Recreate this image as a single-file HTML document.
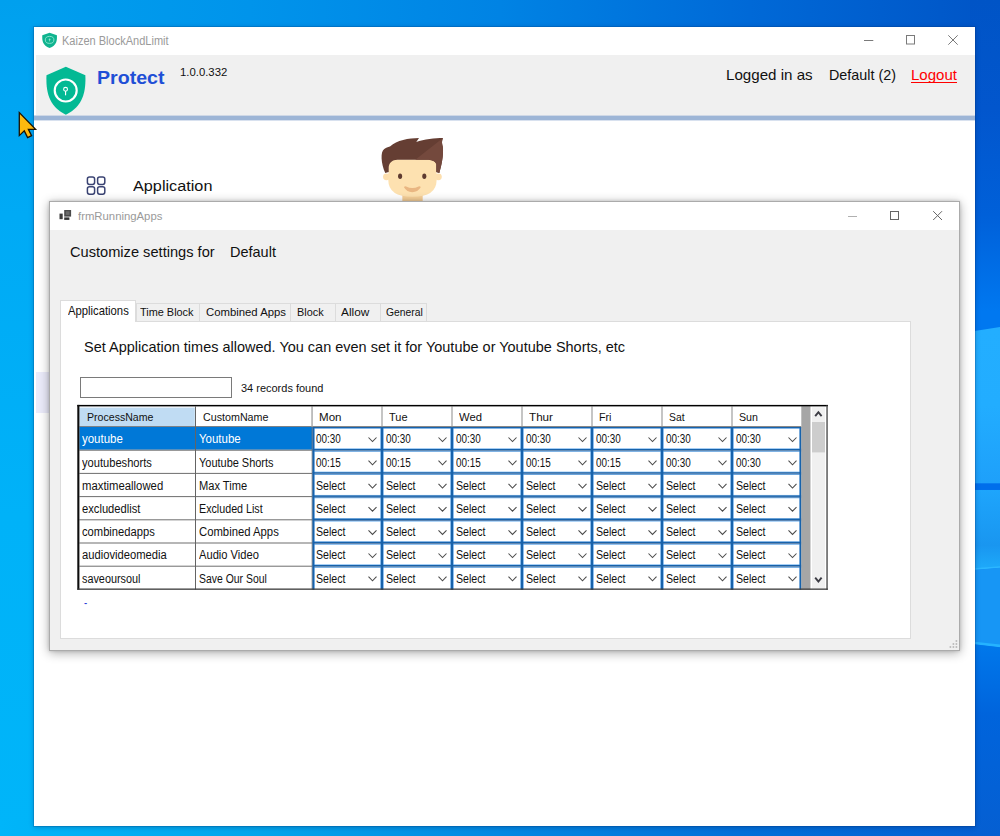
<!DOCTYPE html>
<html lang="en"><head><meta charset="utf-8"><title>Kaizen BlockAndLimit</title>
<style>
html,body{margin:0;padding:0;}
body{width:1000px;height:836px;overflow:hidden;position:relative;font-family:"Liberation Sans",sans-serif;
 background:linear-gradient(to right,#00a0ee 0px,#0094eb 250px,#0083e4 500px,#0069d7 750px,#0054c6 1000px);}
.a{position:absolute;}
.t{position:absolute;white-space:nowrap;line-height:1;transform-origin:0 0;}
</style></head><body>

<div class="a" style="left:0;top:0;width:40px;height:836px;background:linear-gradient(to bottom,#00a0ee 0px,#00a5f2 100px,#00aaf5 215px,#00b2f8 515px,#00b5f9 836px);"></div>
<div class="a" style="left:0;top:820px;width:1000px;height:16px;background:linear-gradient(to right,#00b5f9 0px,#00a5eb 260px,#0088e2 500px,#006fd8 740px,#055fd2 1000px);"></div>
<svg class="a" style="left:970px;top:0;" width="30" height="836" viewBox="970 0 30 836">
<defs>
<linearGradient id="rA" gradientUnits="userSpaceOnUse" x1="0" y1="0" x2="0" y2="331"><stop offset="0" stop-color="#0054c6"/><stop offset=".33" stop-color="#0256cd"/><stop offset=".65" stop-color="#0060d9"/><stop offset=".94" stop-color="#0078f0"/><stop offset="1" stop-color="#0078f0"/></linearGradient>
<linearGradient id="rB" gradientUnits="userSpaceOnUse" x1="0" y1="328" x2="0" y2="483"><stop offset="0" stop-color="#23aeff"/><stop offset=".5" stop-color="#22adff"/><stop offset="1" stop-color="#1ea0fa"/></linearGradient>
<linearGradient id="rC" gradientUnits="userSpaceOnUse" x1="0" y1="490" x2="0" y2="569"><stop offset="0" stop-color="#1ea5fc"/><stop offset=".7" stop-color="#1996f0"/><stop offset="1" stop-color="#1eaafa"/></linearGradient>
<linearGradient id="rE" gradientUnits="userSpaceOnUse" x1="0" y1="644" x2="0" y2="836"><stop offset="0" stop-color="#0078eb"/><stop offset=".37" stop-color="#0064dc"/><stop offset="1" stop-color="#055fd2"/></linearGradient>
</defs>
<rect x="970" y="0" width="30" height="836" fill="url(#rA)"/>
<polygon points="970,331.8 1000,327 1000,484 970,484" fill="url(#rB)"/>
<rect x="970" y="483.3" width="30" height="6.6" fill="#006eeb"/>
<polygon points="970,489.9 1000,489.9 1000,567.6 970,570" fill="url(#rC)"/>
<polygon points="970,568.6 1000,566.2 1000,568 970,570.4" fill="#2cb6ff"/>
<polygon points="970,570.2 1000,567.8 1000,647 970,643" fill="#1796f5"/>
<polygon points="970,641.2 1000,644.6 1000,647.4 970,644" fill="#25b3ff"/>
<polygon points="970,643.8 1000,647.2 1000,836 970,836" fill="url(#rE)"/>
</svg>
<div class="a" id="win" style="left:34.1px;top:26.8px;width:941.1px;height:799px;background:#fff;box-shadow:0 0 0 1px rgba(0,40,100,.17),0 1px 5px rgba(0,25,80,.32);"></div>
<div class="a" style="left:36px;top:55px;width:939px;height:61px;background:#f0f0f0;"></div>
<div class="a" style="left:34px;top:115px;width:941px;height:6px;background:linear-gradient(to bottom,#cfd8e6 0px,#cfd8e6 1px,#9db5d6 1px,#9db5d6 5px,#d8e1ef 5px,#d8e1ef 6px);"></div>
<svg class="a" style="left:41px;top:31px;" width="18" height="18" viewBox="0 0 18 18">
<path d="M8.6 1.7 L15.9 4.2 C16.2 9.8 15.6 14.3 8.6 16.9 C1.6 14.3 1 9.8 1.3 4.2 Z" fill="#10b48f"/>
<ellipse cx="8.6" cy="8.9" rx="4.3" ry="3.5" fill="none" stroke="#a6ecd9" stroke-width="0.8"/>
<circle cx="8.6" cy="8.4" r="0.9" fill="#8fe3cd"/><rect x="8.3" y="8.6" width="0.7" height="1.8" fill="#8fe3cd"/>
</svg>
<span class="t" id="t1" style="left:62.20px;top:35px;font-size:12px;color:#9a9a9a;transform:scaleX(0.9186);">Kaizen BlockAndLimit</span>
<svg class="a" style="left:855px;top:27px;" width="120" height="28" viewBox="855 27 120 28" fill="none" stroke="#7a7a7a" stroke-width="1">
<path d="M864 40.5 H873.3"/><rect x="906.5" y="35.5" width="8" height="8.5"/><path d="M948.3 35.3 L957.7 44.7 M957.7 35.3 L948.3 44.7"/></svg>
<svg class="a" style="left:40px;top:60px;" width="55" height="60" viewBox="0 0 766 836">
<path d="M360 93 L632 213 C640 440 604 640 360 764 C116 640 82 440 90 213 Z" fill="#03b994"/>
<circle cx="358" cy="425" r="153" fill="none" stroke="#fff" stroke-width="30"/>
<circle cx="356" cy="408" r="27" fill="none" stroke="#fff" stroke-width="15"/>
<rect x="348" y="430" width="16" height="62" fill="#fff"/>
</svg>
<span class="t" id="t2" style="left:97.40px;top:70px;font-size:17.8px;color:#1f4fd6;transform:scaleX(1.1024);font-weight:bold;">Protect</span>
<span class="t" id="t3" style="left:180.30px;top:67px;font-size:10.8px;color:#111;transform:scaleX(1.0503);">1.0.0.332</span>
<span class="t" id="t4" style="left:726.40px;top:67px;font-size:15px;color:#111;transform:scaleX(1.0084);">Logged in as</span>
<span class="t" id="t5" style="left:829.00px;top:68px;font-size:14.2px;color:#111;transform:scaleX(1.0103);">Default (2)</span>
<span class="t" id="t6" style="left:911.00px;top:69px;font-size:13.8px;color:#ff0000;transform:scaleX(1.0893);">Logout</span>
<div class="a" style="left:911px;top:81.5px;width:46px;height:1px;background:#ff0000;"></div>
<svg class="a" style="left:85px;top:175px;" width="22" height="21" viewBox="85 175 22 21" fill="none" stroke="#3a4373" stroke-width="1.5">
<rect x="87.4" y="176.9" width="7.2" height="7.5" rx="2.1"/><rect x="97.6" y="176.9" width="7.2" height="7.5" rx="2.1"/>
<rect x="87.4" y="186.7" width="7.2" height="7.5" rx="2.1"/><rect x="97.6" y="186.7" width="7.2" height="7.5" rx="2.1"/></svg>
<span class="t" id="t7" style="left:133.00px;top:178px;font-size:15.3px;color:#111;transform:scaleX(1.0613);">Application</span>
<div class="a" style="left:36px;top:372px;width:14px;height:41px;background:#ebebfa;"></div>
<svg class="a" style="left:370px;top:125px;" width="90" height="77" viewBox="0 0 885 757">
<rect x="318" y="660" width="200" height="100" fill="#f6cf98"/>
<circle cx="162" cy="510" r="34" fill="#fddfae"/><circle cx="672" cy="510" r="34" fill="#fddfae"/>
<path d="M180 410 Q180 340 250 340 L590 340 Q655 340 655 410 L655 540 Q655 705 418 705 Q180 705 180 540 Z" fill="#fde1b0"/>
<path d="M150 472 C108 380 100 262 140 236 C160 222 188 218 200 210 C262 150 380 130 482 128 L455 166 C530 142 640 128 718 128 C700 170 712 190 716 215 C726 300 702 400 682 472 L652 462 L652 385 C642 352 600 342 560 342 L270 342 C220 342 184 372 184 420 L184 462 Z" fill="#653e33"/>
<path d="M445 342 L705 138 L718 128 C700 170 712 190 716 215 C726 300 702 400 682 472 L652 462 L652 385 C642 352 600 342 560 342 Z" fill="#74493d"/>
<ellipse cx="296" cy="505" rx="20" ry="27" fill="#5e3b30"/><ellipse cx="534" cy="505" rx="20" ry="27" fill="#5e3b30"/>
<path d="M334 612 Q340 598 356 604 Q415 636 478 604 Q494 598 499 612 Q470 660 415 660 Q362 660 334 612 Z" fill="#e9b682"/>
</svg>
<div class="a" id="iwin" style="left:49px;top:201px;width:911px;height:450px;background:#f0f0f0;box-sizing:border-box;border:1px solid #ababab;box-shadow:0 2px 10px rgba(0,0,0,.32),0 0 3px rgba(0,0,0,.16);"></div>
<div class="a" style="left:50px;top:202px;width:909px;height:28px;background:#fff;"></div>
<svg class="a" style="left:58px;top:208px;" width="15" height="14" viewBox="58 208 15 14">
<rect x="59.5" y="213.6" width="3.2" height="5.6" fill="#3c3c3c"/><rect x="64.2" y="210" width="6.9" height="6.6" fill="#4a4a4a"/>
<rect x="65.8" y="211.3" width="3.7" height="3.6" fill="#6a6a6a"/><rect x="64.2" y="217.4" width="5.2" height="2.5" fill="#333"/></svg>
<span class="t" id="t8" style="left:77.50px;top:211px;font-size:11.2px;color:#9a9a9a;transform:scaleX(1.0127);">frmRunningApps</span>
<svg class="a" style="left:840px;top:203px;" width="118" height="26" viewBox="840 203 118 26" fill="none" stroke-width="1">
<path d="M848 216.5 H857" stroke="#b0b0b0"/><rect x="890.5" y="211.5" width="8" height="8" stroke="#666"/><path d="M933.2 211.2 L942 220 M942 211.2 L933.2 220" stroke="#666"/></svg>
<span class="t" id="t9" style="left:69.60px;top:245px;font-size:14.2px;color:#111;transform:scaleX(1.0305);">Customize settings for</span>
<span class="t" id="t10" style="left:230.00px;top:245px;font-size:14.2px;color:#111;transform:scaleX(1.0219);">Default</span>
<div class="a" style="left:60px;top:321px;width:851px;height:318px;background:#fff;box-sizing:border-box;border:1px solid #dcdcdc;"></div>
<div class="a" style="left:60px;top:300px;width:76px;height:22px;background:#fff;box-sizing:border-box;border:1px solid #dcdcdc;border-bottom:none;"></div>
<span class="t" id="t11" style="left:67.60px;top:305px;font-size:12.4px;color:#111;transform:scaleX(0.9097);">Applications</span>
<div class="a" style="left:136px;top:303px;width:64px;height:19px;background:#f0f0f0;box-sizing:border-box;border:1px solid #dcdcdc;"></div>
<span class="t" id="t12" style="left:140.40px;top:307px;font-size:11px;color:#111;transform:scaleX(0.9914);">Time Block</span>
<div class="a" style="left:199px;top:303px;width:92px;height:19px;background:#f0f0f0;box-sizing:border-box;border:1px solid #dcdcdc;"></div>
<span class="t" id="t13" style="left:205.50px;top:307px;font-size:11px;color:#111;transform:scaleX(1.0301);">Combined Apps</span>
<div class="a" style="left:290px;top:303px;width:46px;height:19px;background:#f0f0f0;box-sizing:border-box;border:1px solid #dcdcdc;"></div>
<span class="t" id="t14" style="left:297.00px;top:307px;font-size:11px;color:#111;transform:scaleX(0.9907);">Block</span>
<div class="a" style="left:335px;top:303px;width:46px;height:19px;background:#f0f0f0;box-sizing:border-box;border:1px solid #dcdcdc;"></div>
<span class="t" id="t15" style="left:341.20px;top:307px;font-size:11px;color:#111;transform:scaleX(1.0742);">Allow</span>
<div class="a" style="left:380px;top:303px;width:47px;height:19px;background:#f0f0f0;box-sizing:border-box;border:1px solid #dcdcdc;"></div>
<span class="t" id="t16" style="left:386.20px;top:307px;font-size:11px;color:#111;transform:scaleX(0.9397);">General</span>
<span class="t" id="t17" style="left:84.40px;top:340px;font-size:14.2px;color:#111;transform:scaleX(1.0209);">Set Application times allowed. You can even set it for Youtube or Youtube Shorts, etc</span>
<div class="a" style="left:80px;top:377px;width:152px;height:21px;background:#fff;box-sizing:border-box;border:1px solid #7a7a7a;"></div>
<span class="t" id="t18" style="left:241.00px;top:383px;font-size:11.5px;color:#111;transform:scaleX(0.9547);">34 records found</span>
<svg class="a" style="left:70px;top:400px;" width="770" height="196" viewBox="70 400 770 196"><rect x="77.30" y="405.00" width="750.70" height="184.50" fill="#fff"/><rect x="79.40" y="407.60" width="115.40" height="18.40" fill="#c0dcf3"/><rect x="79.40" y="426.70" width="232.80" height="23.00" fill="#0078d7"/><rect x="79.40" y="426.00" width="721.90" height="0.85" fill="#747474"/><rect x="79.40" y="449.70" width="232.60" height="1.00" fill="#6e6e6e"/><rect x="79.40" y="472.90" width="232.60" height="1.00" fill="#6e6e6e"/><rect x="79.40" y="496.10" width="232.60" height="1.00" fill="#6e6e6e"/><rect x="79.40" y="519.30" width="232.60" height="1.00" fill="#6e6e6e"/><rect x="79.40" y="542.50" width="232.60" height="1.00" fill="#6e6e6e"/><rect x="79.40" y="565.70" width="232.60" height="1.00" fill="#6e6e6e"/><rect x="195.00" y="406.50" width="1.00" height="183.00" fill="#646464"/><rect x="311.40" y="406.50" width="1.30" height="20.50" fill="#a0a0a0"/><rect x="311.70" y="427.00" width="1.00" height="162.50" fill="#707070"/><rect x="381.50" y="406.50" width="1.00" height="20.50" fill="#8c8c8c"/><rect x="451.50" y="406.50" width="1.00" height="20.50" fill="#8c8c8c"/><rect x="521.50" y="406.50" width="1.00" height="20.50" fill="#8c8c8c"/><rect x="591.50" y="406.50" width="1.00" height="20.50" fill="#8c8c8c"/><rect x="661.50" y="406.50" width="1.00" height="20.50" fill="#8c8c8c"/><rect x="731.50" y="406.50" width="1.00" height="20.50" fill="#8c8c8c"/><rect x="312.70" y="427.00" width="1.50" height="162.50" fill="#1762ab"/><rect x="314.20" y="427.00" width="0.40" height="162.50" fill="#3a94e8"/><rect x="380.45" y="427.00" width="0.50" height="162.50" fill="#3a94e8"/><rect x="380.95" y="427.00" width="2.10" height="162.50" fill="#1762ab"/><rect x="383.05" y="427.00" width="0.50" height="162.50" fill="#3a94e8"/><rect x="450.45" y="427.00" width="0.50" height="162.50" fill="#3a94e8"/><rect x="450.95" y="427.00" width="2.10" height="162.50" fill="#1762ab"/><rect x="453.05" y="427.00" width="0.50" height="162.50" fill="#3a94e8"/><rect x="520.45" y="427.00" width="0.50" height="162.50" fill="#3a94e8"/><rect x="520.95" y="427.00" width="2.10" height="162.50" fill="#1762ab"/><rect x="523.05" y="427.00" width="0.50" height="162.50" fill="#3a94e8"/><rect x="590.45" y="427.00" width="0.50" height="162.50" fill="#3a94e8"/><rect x="590.95" y="427.00" width="2.10" height="162.50" fill="#1762ab"/><rect x="593.05" y="427.00" width="0.50" height="162.50" fill="#3a94e8"/><rect x="660.45" y="427.00" width="0.50" height="162.50" fill="#3a94e8"/><rect x="660.95" y="427.00" width="2.10" height="162.50" fill="#1762ab"/><rect x="663.05" y="427.00" width="0.50" height="162.50" fill="#3a94e8"/><rect x="730.45" y="427.00" width="0.50" height="162.50" fill="#3a94e8"/><rect x="730.95" y="427.00" width="2.10" height="162.50" fill="#1762ab"/><rect x="733.05" y="427.00" width="0.50" height="162.50" fill="#3a94e8"/><rect x="799.40" y="427.00" width="0.40" height="162.50" fill="#3a94e8"/><rect x="799.80" y="427.00" width="1.50" height="162.50" fill="#1762ab"/><rect x="312.70" y="427.00" width="488.60" height="1.30" fill="#1762ab"/><rect x="314.20" y="428.30" width="485.60" height="0.40" fill="#3a94e8"/><rect x="312.70" y="448.55" width="488.60" height="0.45" fill="#3a94e8"/><rect x="312.70" y="449.00" width="488.60" height="1.50" fill="#1762ab"/><rect x="312.70" y="450.50" width="488.60" height="0.80" fill="#3f6a9a"/><rect x="312.70" y="451.30" width="488.60" height="0.50" fill="#3a94e8"/><rect x="312.70" y="471.75" width="488.60" height="0.45" fill="#3a94e8"/><rect x="312.70" y="472.20" width="488.60" height="1.50" fill="#1762ab"/><rect x="312.70" y="473.70" width="488.60" height="0.80" fill="#3f6a9a"/><rect x="312.70" y="474.50" width="488.60" height="0.50" fill="#3a94e8"/><rect x="312.70" y="494.95" width="488.60" height="0.45" fill="#3a94e8"/><rect x="312.70" y="495.40" width="488.60" height="1.50" fill="#1762ab"/><rect x="312.70" y="496.90" width="488.60" height="0.80" fill="#3f6a9a"/><rect x="312.70" y="497.70" width="488.60" height="0.50" fill="#3a94e8"/><rect x="312.70" y="518.15" width="488.60" height="0.45" fill="#3a94e8"/><rect x="312.70" y="518.60" width="488.60" height="1.50" fill="#1762ab"/><rect x="312.70" y="520.10" width="488.60" height="0.80" fill="#3f6a9a"/><rect x="312.70" y="520.90" width="488.60" height="0.50" fill="#3a94e8"/><rect x="312.70" y="541.35" width="488.60" height="0.45" fill="#3a94e8"/><rect x="312.70" y="541.80" width="488.60" height="1.50" fill="#1762ab"/><rect x="312.70" y="543.30" width="488.60" height="0.80" fill="#3f6a9a"/><rect x="312.70" y="544.10" width="488.60" height="0.50" fill="#3a94e8"/><rect x="312.70" y="564.55" width="488.60" height="0.45" fill="#3a94e8"/><rect x="312.70" y="565.00" width="488.60" height="1.50" fill="#1762ab"/><rect x="312.70" y="566.50" width="488.60" height="0.80" fill="#3f6a9a"/><rect x="312.70" y="567.30" width="488.60" height="0.50" fill="#3a94e8"/><rect x="380.95" y="427.00" width="2.10" height="162.50" fill="#1762ab"/><rect x="450.95" y="427.00" width="2.10" height="162.50" fill="#1762ab"/><rect x="520.95" y="427.00" width="2.10" height="162.50" fill="#1762ab"/><rect x="590.95" y="427.00" width="2.10" height="162.50" fill="#1762ab"/><rect x="660.95" y="427.00" width="2.10" height="162.50" fill="#1762ab"/><rect x="730.95" y="427.00" width="2.10" height="162.50" fill="#1762ab"/><rect x="312.70" y="427.00" width="1.50" height="162.50" fill="#1762ab"/><rect x="799.80" y="427.00" width="1.50" height="162.50" fill="#1762ab"/><rect x="801.30" y="406.20" width="9.40" height="183.30" fill="#a6a6a6"/><rect x="810.70" y="406.20" width="15.60" height="183.30" fill="#ffffff"/><rect x="812.00" y="407.20" width="13.00" height="181.30" fill="#f0f0f0"/><rect x="812.00" y="422.00" width="13.00" height="30.40" fill="#cdcdcd"/><path d="M815.2 416.2 L818.4 412.2 L821.6 416.2" fill="none" stroke="#3c3c44" stroke-width="1.9"/><path d="M815.2 577.6 L818.4 581.6 L821.6 577.6" fill="none" stroke="#3c3c44" stroke-width="1.9"/><rect x="77.30" y="404.90" width="750.70" height="1.50" fill="#000"/><rect x="77.30" y="404.90" width="2.10" height="184.90" fill="#0c0c0c"/><rect x="826.30" y="405.50" width="1.50" height="184.30" fill="#5a5a5a"/><rect x="77.30" y="588.50" width="750.50" height="1.30" fill="#3a3a3a"/><path d="M368.50 437.50 L372.50 441.60 L376.50 437.50" fill="none" stroke="#4a4a4a" stroke-width="1.05"/><path d="M438.50 437.50 L442.50 441.60 L446.50 437.50" fill="none" stroke="#4a4a4a" stroke-width="1.05"/><path d="M508.50 437.50 L512.50 441.60 L516.50 437.50" fill="none" stroke="#4a4a4a" stroke-width="1.05"/><path d="M578.50 437.50 L582.50 441.60 L586.50 437.50" fill="none" stroke="#4a4a4a" stroke-width="1.05"/><path d="M648.50 437.50 L652.50 441.60 L656.50 437.50" fill="none" stroke="#4a4a4a" stroke-width="1.05"/><path d="M718.50 437.50 L722.50 441.60 L726.50 437.50" fill="none" stroke="#4a4a4a" stroke-width="1.05"/><path d="M788.50 437.50 L792.50 441.60 L796.50 437.50" fill="none" stroke="#4a4a4a" stroke-width="1.05"/><path d="M368.50 460.70 L372.50 464.80 L376.50 460.70" fill="none" stroke="#4a4a4a" stroke-width="1.05"/><path d="M438.50 460.70 L442.50 464.80 L446.50 460.70" fill="none" stroke="#4a4a4a" stroke-width="1.05"/><path d="M508.50 460.70 L512.50 464.80 L516.50 460.70" fill="none" stroke="#4a4a4a" stroke-width="1.05"/><path d="M578.50 460.70 L582.50 464.80 L586.50 460.70" fill="none" stroke="#4a4a4a" stroke-width="1.05"/><path d="M648.50 460.70 L652.50 464.80 L656.50 460.70" fill="none" stroke="#4a4a4a" stroke-width="1.05"/><path d="M718.50 460.70 L722.50 464.80 L726.50 460.70" fill="none" stroke="#4a4a4a" stroke-width="1.05"/><path d="M788.50 460.70 L792.50 464.80 L796.50 460.70" fill="none" stroke="#4a4a4a" stroke-width="1.05"/><path d="M368.50 483.90 L372.50 488.00 L376.50 483.90" fill="none" stroke="#4a4a4a" stroke-width="1.05"/><path d="M438.50 483.90 L442.50 488.00 L446.50 483.90" fill="none" stroke="#4a4a4a" stroke-width="1.05"/><path d="M508.50 483.90 L512.50 488.00 L516.50 483.90" fill="none" stroke="#4a4a4a" stroke-width="1.05"/><path d="M578.50 483.90 L582.50 488.00 L586.50 483.90" fill="none" stroke="#4a4a4a" stroke-width="1.05"/><path d="M648.50 483.90 L652.50 488.00 L656.50 483.90" fill="none" stroke="#4a4a4a" stroke-width="1.05"/><path d="M718.50 483.90 L722.50 488.00 L726.50 483.90" fill="none" stroke="#4a4a4a" stroke-width="1.05"/><path d="M788.50 483.90 L792.50 488.00 L796.50 483.90" fill="none" stroke="#4a4a4a" stroke-width="1.05"/><path d="M368.50 507.10 L372.50 511.20 L376.50 507.10" fill="none" stroke="#4a4a4a" stroke-width="1.05"/><path d="M438.50 507.10 L442.50 511.20 L446.50 507.10" fill="none" stroke="#4a4a4a" stroke-width="1.05"/><path d="M508.50 507.10 L512.50 511.20 L516.50 507.10" fill="none" stroke="#4a4a4a" stroke-width="1.05"/><path d="M578.50 507.10 L582.50 511.20 L586.50 507.10" fill="none" stroke="#4a4a4a" stroke-width="1.05"/><path d="M648.50 507.10 L652.50 511.20 L656.50 507.10" fill="none" stroke="#4a4a4a" stroke-width="1.05"/><path d="M718.50 507.10 L722.50 511.20 L726.50 507.10" fill="none" stroke="#4a4a4a" stroke-width="1.05"/><path d="M788.50 507.10 L792.50 511.20 L796.50 507.10" fill="none" stroke="#4a4a4a" stroke-width="1.05"/><path d="M368.50 530.30 L372.50 534.40 L376.50 530.30" fill="none" stroke="#4a4a4a" stroke-width="1.05"/><path d="M438.50 530.30 L442.50 534.40 L446.50 530.30" fill="none" stroke="#4a4a4a" stroke-width="1.05"/><path d="M508.50 530.30 L512.50 534.40 L516.50 530.30" fill="none" stroke="#4a4a4a" stroke-width="1.05"/><path d="M578.50 530.30 L582.50 534.40 L586.50 530.30" fill="none" stroke="#4a4a4a" stroke-width="1.05"/><path d="M648.50 530.30 L652.50 534.40 L656.50 530.30" fill="none" stroke="#4a4a4a" stroke-width="1.05"/><path d="M718.50 530.30 L722.50 534.40 L726.50 530.30" fill="none" stroke="#4a4a4a" stroke-width="1.05"/><path d="M788.50 530.30 L792.50 534.40 L796.50 530.30" fill="none" stroke="#4a4a4a" stroke-width="1.05"/><path d="M368.50 553.50 L372.50 557.60 L376.50 553.50" fill="none" stroke="#4a4a4a" stroke-width="1.05"/><path d="M438.50 553.50 L442.50 557.60 L446.50 553.50" fill="none" stroke="#4a4a4a" stroke-width="1.05"/><path d="M508.50 553.50 L512.50 557.60 L516.50 553.50" fill="none" stroke="#4a4a4a" stroke-width="1.05"/><path d="M578.50 553.50 L582.50 557.60 L586.50 553.50" fill="none" stroke="#4a4a4a" stroke-width="1.05"/><path d="M648.50 553.50 L652.50 557.60 L656.50 553.50" fill="none" stroke="#4a4a4a" stroke-width="1.05"/><path d="M718.50 553.50 L722.50 557.60 L726.50 553.50" fill="none" stroke="#4a4a4a" stroke-width="1.05"/><path d="M788.50 553.50 L792.50 557.60 L796.50 553.50" fill="none" stroke="#4a4a4a" stroke-width="1.05"/><path d="M368.50 576.70 L372.50 580.80 L376.50 576.70" fill="none" stroke="#4a4a4a" stroke-width="1.05"/><path d="M438.50 576.70 L442.50 580.80 L446.50 576.70" fill="none" stroke="#4a4a4a" stroke-width="1.05"/><path d="M508.50 576.70 L512.50 580.80 L516.50 576.70" fill="none" stroke="#4a4a4a" stroke-width="1.05"/><path d="M578.50 576.70 L582.50 580.80 L586.50 576.70" fill="none" stroke="#4a4a4a" stroke-width="1.05"/><path d="M648.50 576.70 L652.50 580.80 L656.50 576.70" fill="none" stroke="#4a4a4a" stroke-width="1.05"/><path d="M718.50 576.70 L722.50 580.80 L726.50 576.70" fill="none" stroke="#4a4a4a" stroke-width="1.05"/><path d="M788.50 576.70 L792.50 580.80 L796.50 576.70" fill="none" stroke="#4a4a4a" stroke-width="1.05"/></svg>
<span class="t" id="t19" style="left:87.25px;top:411px;font-size:11.6px;color:#111;transform:scaleX(0.9122);">ProcessName</span>
<span class="t" id="t20" style="left:203.10px;top:411px;font-size:11.6px;color:#111;transform:scaleX(0.9234);">CustomName</span>
<span class="t" id="t21" style="left:319.00px;top:411px;font-size:11.6px;color:#111;transform:scaleX(0.9973);">Mon</span>
<span class="t" id="t22" style="left:389.00px;top:411px;font-size:11.6px;color:#111;transform:scaleX(0.9465);">Tue</span>
<span class="t" id="t23" style="left:459.00px;top:411px;font-size:11.6px;color:#111;transform:scaleX(0.9719);">Wed</span>
<span class="t" id="t24" style="left:529.00px;top:411px;font-size:11.6px;color:#111;transform:scaleX(1.0068);">Thur</span>
<span class="t" id="t25" style="left:599.00px;top:411px;font-size:11.6px;color:#111;transform:scaleX(0.9250);">Fri</span>
<span class="t" id="t26" style="left:669.00px;top:411px;font-size:11.6px;color:#111;transform:scaleX(0.8908);">Sat</span>
<span class="t" id="t27" style="left:739.00px;top:411px;font-size:11.6px;color:#111;transform:scaleX(0.9202);">Sun</span>
<span class="t" id="t28" style="left:82.40px;top:433px;font-size:12px;color:#fff;transform:scaleX(0.9562);">youtube</span>
<span class="t" id="t29" style="left:199.00px;top:433px;font-size:12px;color:#fff;transform:scaleX(0.9560);">Youtube</span>
<span class="t" id="t30" style="left:315.60px;top:433px;font-size:12px;color:#111;transform:scaleX(0.8250);">00:30</span>
<span class="t" id="t31" style="left:385.60px;top:433px;font-size:12px;color:#111;transform:scaleX(0.8250);">00:30</span>
<span class="t" id="t32" style="left:455.60px;top:433px;font-size:12px;color:#111;transform:scaleX(0.8250);">00:30</span>
<span class="t" id="t33" style="left:525.60px;top:433px;font-size:12px;color:#111;transform:scaleX(0.8250);">00:30</span>
<span class="t" id="t34" style="left:595.60px;top:433px;font-size:12px;color:#111;transform:scaleX(0.8250);">00:30</span>
<span class="t" id="t35" style="left:665.60px;top:433px;font-size:12px;color:#111;transform:scaleX(0.8250);">00:30</span>
<span class="t" id="t36" style="left:735.60px;top:433px;font-size:12px;color:#111;transform:scaleX(0.8250);">00:30</span>
<span class="t" id="t37" style="left:82.40px;top:457px;font-size:12px;color:#111;transform:scaleX(0.9275);">youtubeshorts</span>
<span class="t" id="t38" style="left:199.00px;top:457px;font-size:12px;color:#111;transform:scaleX(0.9130);">Youtube Shorts</span>
<span class="t" id="t39" style="left:315.60px;top:457px;font-size:12px;color:#111;transform:scaleX(0.8250);">00:15</span>
<span class="t" id="t40" style="left:385.60px;top:457px;font-size:12px;color:#111;transform:scaleX(0.8250);">00:15</span>
<span class="t" id="t41" style="left:455.60px;top:457px;font-size:12px;color:#111;transform:scaleX(0.8250);">00:15</span>
<span class="t" id="t42" style="left:525.60px;top:457px;font-size:12px;color:#111;transform:scaleX(0.8250);">00:15</span>
<span class="t" id="t43" style="left:595.60px;top:457px;font-size:12px;color:#111;transform:scaleX(0.8250);">00:15</span>
<span class="t" id="t44" style="left:665.60px;top:457px;font-size:12px;color:#111;transform:scaleX(0.8250);">00:30</span>
<span class="t" id="t45" style="left:735.60px;top:457px;font-size:12px;color:#111;transform:scaleX(0.8250);">00:30</span>
<span class="t" id="t46" style="left:82.40px;top:480px;font-size:12px;color:#111;transform:scaleX(0.9437);">maxtimeallowed</span>
<span class="t" id="t47" style="left:199.00px;top:480px;font-size:12px;color:#111;transform:scaleX(0.9246);">Max Time</span>
<span class="t" id="t48" style="left:315.60px;top:480px;font-size:12px;color:#111;transform:scaleX(0.8843);">Select</span>
<span class="t" id="t49" style="left:385.60px;top:480px;font-size:12px;color:#111;transform:scaleX(0.8843);">Select</span>
<span class="t" id="t50" style="left:455.60px;top:480px;font-size:12px;color:#111;transform:scaleX(0.8843);">Select</span>
<span class="t" id="t51" style="left:525.60px;top:480px;font-size:12px;color:#111;transform:scaleX(0.8843);">Select</span>
<span class="t" id="t52" style="left:595.60px;top:480px;font-size:12px;color:#111;transform:scaleX(0.8843);">Select</span>
<span class="t" id="t53" style="left:665.60px;top:480px;font-size:12px;color:#111;transform:scaleX(0.8843);">Select</span>
<span class="t" id="t54" style="left:735.60px;top:480px;font-size:12px;color:#111;transform:scaleX(0.8843);">Select</span>
<span class="t" id="t55" style="left:82.40px;top:503px;font-size:12px;color:#111;transform:scaleX(0.9314);">excludedlist</span>
<span class="t" id="t56" style="left:199.00px;top:503px;font-size:12px;color:#111;transform:scaleX(0.8922);">Excluded List</span>
<span class="t" id="t57" style="left:315.60px;top:503px;font-size:12px;color:#111;transform:scaleX(0.8843);">Select</span>
<span class="t" id="t58" style="left:385.60px;top:503px;font-size:12px;color:#111;transform:scaleX(0.8843);">Select</span>
<span class="t" id="t59" style="left:455.60px;top:503px;font-size:12px;color:#111;transform:scaleX(0.8843);">Select</span>
<span class="t" id="t60" style="left:525.60px;top:503px;font-size:12px;color:#111;transform:scaleX(0.8843);">Select</span>
<span class="t" id="t61" style="left:595.60px;top:503px;font-size:12px;color:#111;transform:scaleX(0.8843);">Select</span>
<span class="t" id="t62" style="left:665.60px;top:503px;font-size:12px;color:#111;transform:scaleX(0.8843);">Select</span>
<span class="t" id="t63" style="left:735.60px;top:503px;font-size:12px;color:#111;transform:scaleX(0.8843);">Select</span>
<span class="t" id="t64" style="left:82.40px;top:526px;font-size:12px;color:#111;transform:scaleX(0.9326);">combinedapps</span>
<span class="t" id="t65" style="left:199.00px;top:526px;font-size:12px;color:#111;transform:scaleX(0.9419);">Combined Apps</span>
<span class="t" id="t66" style="left:315.60px;top:526px;font-size:12px;color:#111;transform:scaleX(0.8843);">Select</span>
<span class="t" id="t67" style="left:385.60px;top:526px;font-size:12px;color:#111;transform:scaleX(0.8843);">Select</span>
<span class="t" id="t68" style="left:455.60px;top:526px;font-size:12px;color:#111;transform:scaleX(0.8843);">Select</span>
<span class="t" id="t69" style="left:525.60px;top:526px;font-size:12px;color:#111;transform:scaleX(0.8843);">Select</span>
<span class="t" id="t70" style="left:595.60px;top:526px;font-size:12px;color:#111;transform:scaleX(0.8843);">Select</span>
<span class="t" id="t71" style="left:665.60px;top:526px;font-size:12px;color:#111;transform:scaleX(0.8843);">Select</span>
<span class="t" id="t72" style="left:735.60px;top:526px;font-size:12px;color:#111;transform:scaleX(0.8843);">Select</span>
<span class="t" id="t73" style="left:82.40px;top:549px;font-size:12px;color:#111;transform:scaleX(0.9341);">audiovideomedia</span>
<span class="t" id="t74" style="left:199.00px;top:549px;font-size:12px;color:#111;transform:scaleX(0.9287);">Audio Video</span>
<span class="t" id="t75" style="left:315.60px;top:549px;font-size:12px;color:#111;transform:scaleX(0.8843);">Select</span>
<span class="t" id="t76" style="left:385.60px;top:549px;font-size:12px;color:#111;transform:scaleX(0.8843);">Select</span>
<span class="t" id="t77" style="left:455.60px;top:549px;font-size:12px;color:#111;transform:scaleX(0.8843);">Select</span>
<span class="t" id="t78" style="left:525.60px;top:549px;font-size:12px;color:#111;transform:scaleX(0.8843);">Select</span>
<span class="t" id="t79" style="left:595.60px;top:549px;font-size:12px;color:#111;transform:scaleX(0.8843);">Select</span>
<span class="t" id="t80" style="left:665.60px;top:549px;font-size:12px;color:#111;transform:scaleX(0.8843);">Select</span>
<span class="t" id="t81" style="left:735.60px;top:549px;font-size:12px;color:#111;transform:scaleX(0.8843);">Select</span>
<span class="t" id="t82" style="left:82.40px;top:573px;font-size:12px;color:#111;transform:scaleX(0.9029);">saveoursoul</span>
<span class="t" id="t83" style="left:199.00px;top:573px;font-size:12px;color:#111;transform:scaleX(0.8686);">Save Our Soul</span>
<span class="t" id="t84" style="left:315.60px;top:573px;font-size:12px;color:#111;transform:scaleX(0.8843);">Select</span>
<span class="t" id="t85" style="left:385.60px;top:573px;font-size:12px;color:#111;transform:scaleX(0.8843);">Select</span>
<span class="t" id="t86" style="left:455.60px;top:573px;font-size:12px;color:#111;transform:scaleX(0.8843);">Select</span>
<span class="t" id="t87" style="left:525.60px;top:573px;font-size:12px;color:#111;transform:scaleX(0.8843);">Select</span>
<span class="t" id="t88" style="left:595.60px;top:573px;font-size:12px;color:#111;transform:scaleX(0.8843);">Select</span>
<span class="t" id="t89" style="left:665.60px;top:573px;font-size:12px;color:#111;transform:scaleX(0.8843);">Select</span>
<span class="t" id="t90" style="left:735.60px;top:573px;font-size:12px;color:#111;transform:scaleX(0.8843);">Select</span>
<span class="t" id="t91" style="left:83.90px;top:597px;font-size:12px;color:#2341d7;transform:scaleX(0.7960);">-</span>
<svg class="a" style="left:940px;top:630px;" width="20" height="20" viewBox="940 630 20 20"><rect x="955.6" y="646.2" width="1.6" height="1.6" fill="#b4b4b4"/><rect x="952.6" y="646.2" width="1.6" height="1.6" fill="#b4b4b4"/><rect x="949.6" y="646.2" width="1.6" height="1.6" fill="#b4b4b4"/><rect x="955.6" y="643.2" width="1.6" height="1.6" fill="#b4b4b4"/><rect x="952.6" y="643.2" width="1.6" height="1.6" fill="#b4b4b4"/><rect x="955.6" y="640.2" width="1.6" height="1.6" fill="#b4b4b4"/></svg>
<svg class="a" style="left:14px;top:108px;" width="28" height="34" viewBox="14 108 28 34">
<path d="M19.3 112.6 L19.3 135.6 L24.3 130.9 L27.6 137.6 L31.6 135.7 L28.4 129.4 L35.6 129.3 Z" fill="#fdb90f" stroke="#1a1205" stroke-width="1.3" stroke-linejoin="miter"/></svg>
</body></html>
